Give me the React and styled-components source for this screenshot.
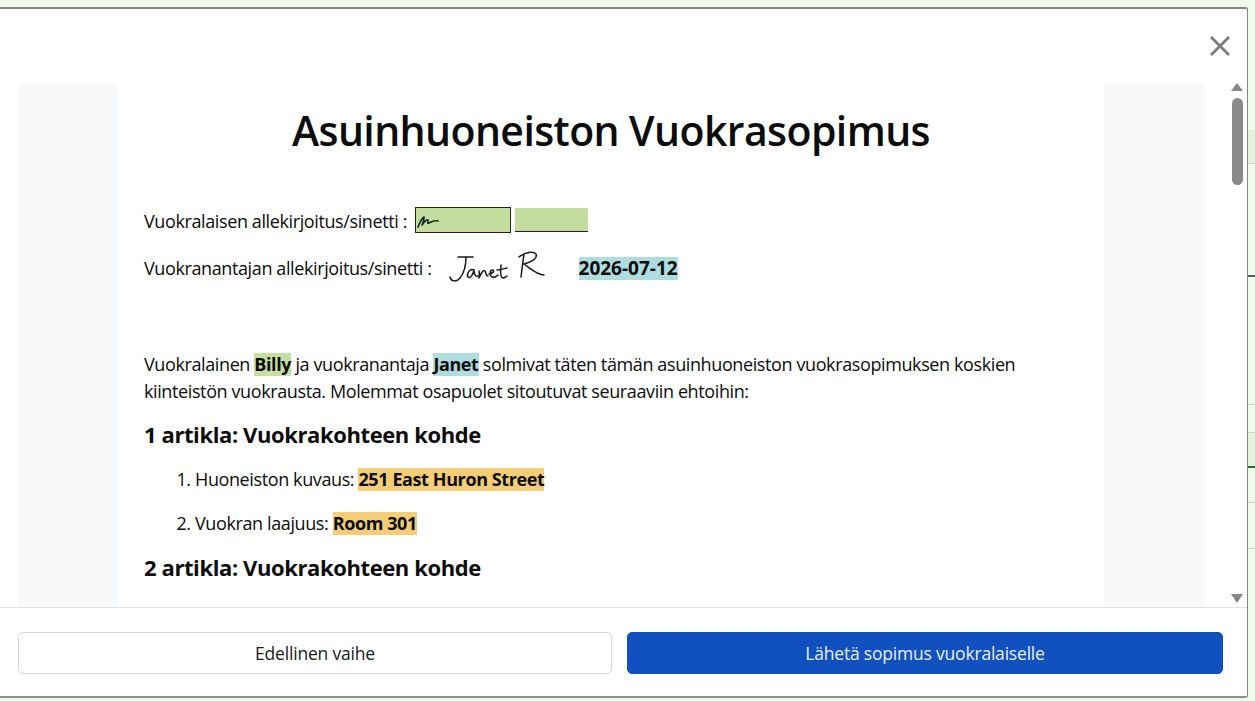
import React from 'react';
import styled, { createGlobalStyle } from 'styled-components';

const Global = createGlobalStyle`
  html, body { margin: 0; padding: 0; height: 100%; overflow: hidden; }
  body { font-family: "Open Sans", "Noto Sans", "Liberation Sans", sans-serif; color: #0c0c0c; background: #f3f8ec; }
  * { box-sizing: border-box; }
`;

export default function App() {
  return (
    <Page>
      <Global />
      <Modal>
        <ModalHeader>
          <CloseButton aria-label="Sulje">
            <svg width="22" height="22" viewBox="0 0 22 22" fill="none" stroke="#7b7b7b" strokeWidth="2.8">
              <path d="M2 2 L20 20 M20 2 L2 20" />
            </svg>
          </CloseButton>
        </ModalHeader>
        <ModalBody>
          <Viewer>
            <Sheet>
              <Title>Asuinhuoneiston Vuokrasopimus</Title>
              <SignRow $top={47}>
                <span>Vuokralaisen allekirjoitus/sinetti :</span>
                <SignField $active>
                  <svg width="24" height="18" viewBox="0 0 24 18" fill="none" stroke="#1c2a1c" strokeWidth="1.7" strokeLinecap="round" strokeLinejoin="round">
                    <path d="M2 15 C4 10 6 6 8 5 C8 8 7 11 6 13 C8 10 10 7 12 8 C12 10 11 12 13 11 C15 10 18 8 22 9" />
                  </svg>
                </SignField>
                <SignField />
              </SignRow>
              <SignRow $top={20}>
                <span>Vuokranantajan allekirjoitus/sinetti :</span>
                <Signature width="100" height="36" viewBox="0 0 100 36" fill="none" stroke="#16181c" strokeWidth="1.5" strokeLinecap="round" strokeLinejoin="round">
                  <path d="M11 6 L26 6 M19 6 C19 14 17 22 13 27 C10 31 4 31 3 26" />
                  <path d="M27 19 C23 17 19 23 21 26 C23 28 26 24 27 19 C27 22 28 26 31 25" />
                  <path d="M32 20 C33 23 32 25 32 27 C34 23 36 18 38 20 C39 22 39 25 41 25" />
                  <path d="M42 23 C45 23 48 20 46 19 C43 18 42 24 45 26 C47 27 50 25 51 24" />
                  <path d="M54 14 C54 18 52 26 56 27 C58 27 59 26 60 25 M50 19 C53 19 56 18 60 17" />
                  <path d="M74 26 C75 18 76 10 77 3 M72 6 C78 1 86 0 89 3 C91 8 84 11 77 13 C83 17 90 24 97 24" />
                </Signature>
                <DateMark>2026-07-12</DateMark>
              </SignRow>
              <Intro>
                Vuokralainen <Mark $color="#c5dfa0">Billy</Mark> ja vuokranantaja <Mark $color="#aedde0">Janet</Mark> solmivat täten tämän asuinhuoneiston vuokrasopimuksen koskien
                <br />
                kiinteistön vuokrausta. Molemmat osapuolet sitoutuvat seuraaviin ehtoihin:
              </Intro>
              <Heading $top={13}>1 artikla: Vuokrakohteen kohde</Heading>
              <Terms>
                <li>Huoneiston kuvaus: <Mark $color="#f5cd77">251 East Huron Street</Mark></li>
                <li>Vuokran laajuus: <Mark $color="#f5cd77">Room 301</Mark></li>
              </Terms>
              <Heading $top={14}>2 artikla: Vuokrakohteen kohde</Heading>
            </Sheet>
          </Viewer>
          <ScrollTrack>
            <ScrollArrow />
            <ScrollThumb />
            <ScrollArrow $down />
          </ScrollTrack>
        </ModalBody>
        <ModalFooter>
          <FooterButton>Edellinen vaihe</FooterButton>
          <FooterButton $primary>Lähetä sopimus vuokralaiselle</FooterButton>
        </ModalFooter>
      </Modal>
      <BehindPage>
        <BehindBlock $h={123} />
        <BehindBlock $h={33} $tint />
        <BehindBlock $h={112} $line />
        <BehindDash />
        <BehindBlock $h={127} />
        <BehindBlock $h={28} $line />
        <BehindBlock $h={34} $tint $line />
        <BehindDash $green />
        <BehindBlock $h={34} />
        <BehindBlock $h={46} $line />
        <BehindBlock $h={40} $line />
      </BehindPage>
    </Page>
  );
}

const Page = styled.div`
  width: 1255px;
  height: 701px;
  display: flex;
  align-items: stretch;
  padding: 7px 0 3px;
  background: #f3f8ec;
`;

const Modal = styled.div`
  width: 1248px;
  display: flex;
  flex-direction: column;
  background: #fff;
  border-top: 2px solid #7e8a7c;
  border-right: 1.5px solid #7e8a7c;
  border-bottom: 2px solid #8f918f;
  border-radius: 0 3px 3px 0;
`;

const ModalHeader = styled.div`
  height: 74px;
  flex: none;
  display: flex;
  justify-content: flex-end;
  align-items: flex-start;
  padding: 26px 16px 0 0;
`;

const CloseButton = styled.button`
  width: 22px;
  height: 22px;
  padding: 0;
  border: none;
  background: none;
  display: block;
`;

const ModalBody = styled.div`
  flex: 1;
  min-height: 0;
  display: flex;
  padding-left: 18px;
`;

const Viewer = styled.div`
  width: 1186px;
  flex: none;
  overflow: hidden;
  padding: 0 100px;
  background: #f8f9fa;
`;

const Sheet = styled.div`
  height: 100%;
  background: #fff;
  padding: 16px 26px 0;
  font-size: 18px;
  line-height: 27px;
  letter-spacing: -0.39px;
`;

const Title = styled.h1`
  margin: 0;
  text-align: center;
  font-size: 41px;
  line-height: 62px;
  font-weight: 600;
  letter-spacing: -0.6px;
`;

const SignRow = styled.div`
  display: flex;
  align-items: center;
  margin-top: ${(p) => p.$top}px;
  height: 27px;
`;

const SignField = styled.span`
  display: block;
  width: ${(p) => (p.$active ? 96 : 73)}px;
  height: ${(p) => (p.$active ? 26 : 24)}px;
  margin-left: ${(p) => (p.$active ? 8 : 4)}px;
  margin-bottom: 4px;
  background: #c4dd9f;
  border-bottom: 1.5px solid #222;
  border: ${(p) => (p.$active ? '1.5px solid #222' : undefined)};
  svg { display: block; margin-top: 4px; }
`;

const Signature = styled.svg`
  margin-left: 15px;
  flex: none;
`;

const DateMark = styled.span`
  margin-left: 32px;
  background: #aedde0;
  font-size: 19px;
  font-weight: 700;
  line-height: 23px;
  letter-spacing: 0;
`;

const Mark = styled.span`
  display: inline-block;
  background: ${(p) => p.$color};
  font-weight: 700;
  line-height: 23px;
  letter-spacing: -0.4px;
`;

const Intro = styled.p`
  margin: 69px 0 0;
`;

const Heading = styled.h2`
  margin: ${(p) => p.$top}px 0 0;
  font-size: 22px;
  line-height: 32px;
  font-weight: 700;
  letter-spacing: -0.4px;
`;

const Terms = styled.ol`
  margin: 16px 0 0;
  padding: 0 0 0 51px;
  li { margin-bottom: 17px; }
  li:last-child { margin-bottom: 0; }
`;

const ScrollTrack = styled.div`
  flex: 1;
  display: flex;
  flex-direction: column;
  align-items: center;
  padding: 0 4px 0 27px;
`;

const ScrollArrow = styled.span`
  flex: none;
  width: 0;
  height: 0;
  border-left: 6.5px solid transparent;
  border-right: 6.5px solid transparent;
  ${(p) => (p.$down
    ? 'border-top: 9px solid #868686; margin-top: auto; margin-bottom: 4px;'
    : 'border-bottom: 8px solid #868686;')}
`;

const ScrollThumb = styled.span`
  flex: none;
  width: 11px;
  height: 87px;
  margin-top: 7px;
  border-radius: 6px;
  background: #8a8a8a;
`;

const ModalFooter = styled.div`
  flex: none;
  height: 89px;
  display: flex;
  gap: 15px;
  padding: 24px 24px 0 18px;
  border-top: 1px solid #dfe1e2;
`;

const FooterButton = styled.button`
  flex: ${(p) => (p.$primary ? '596px' : '594px')} 0 0;
  height: 42px;
  border-radius: 5px;
  font-family: inherit;
  font-size: 17.5px;
  letter-spacing: -0.2px;
  border: 1px solid ${(p) => (p.$primary ? '#0f4fbb' : '#d5d7d8')};
  background: ${(p) => (p.$primary ? '#1051bf' : '#fff')};
  color: ${(p) => (p.$primary ? '#e8effa' : '#1a1a1a')};
`;

const BehindPage = styled.div`
  flex: 1;
  display: flex;
  flex-direction: column;
`;

const BehindBlock = styled.div`
  height: ${(p) => p.$h}px;
  flex: none;
  background: ${(p) => (p.$tint ? '#e6f1dd' : 'transparent')};
  border-top: ${(p) => (p.$line ? '1px solid #cfd6c8' : 'none')};
`;

const BehindDash = styled.div`
  height: 2px;
  flex: none;
  background: ${(p) => (p.$green ? '#2f6b3a' : '#55605a')};
`;
